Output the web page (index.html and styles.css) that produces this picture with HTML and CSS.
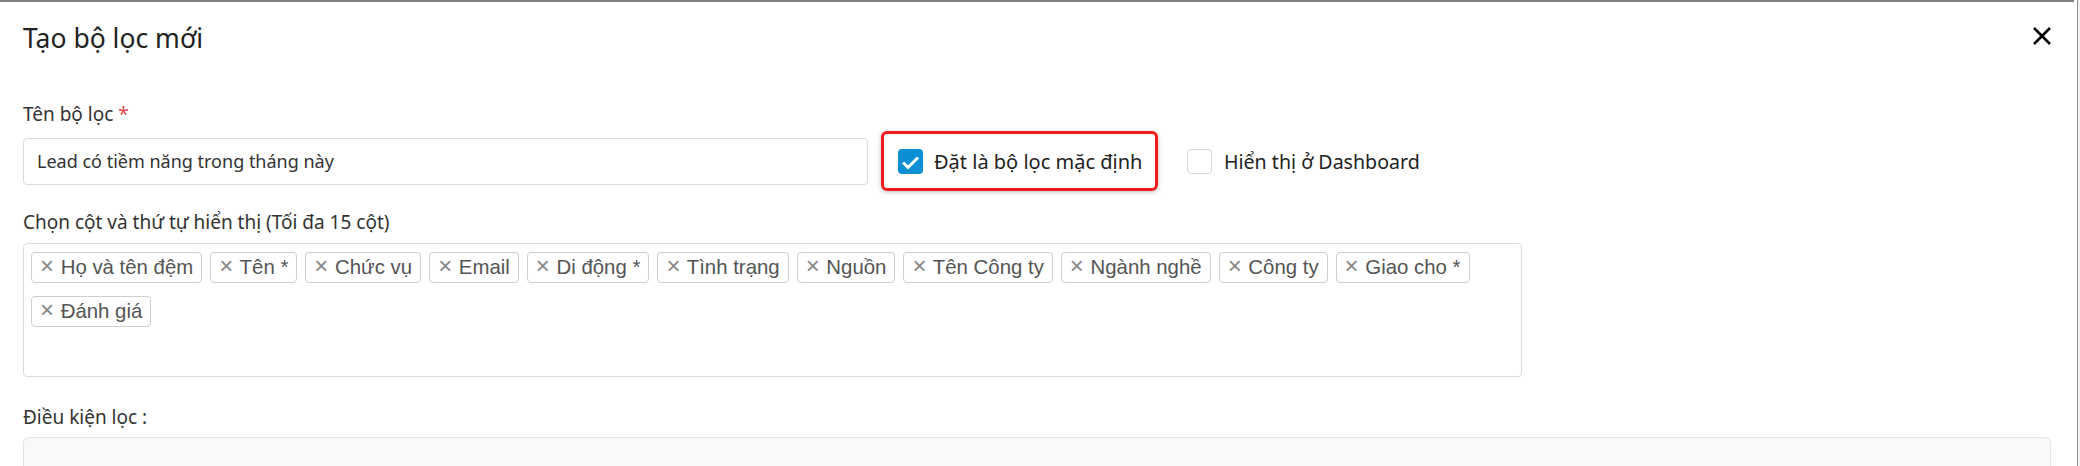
FILE: index.html
```html
<!DOCTYPE html>
<html lang="vi">
<head>
  <meta charset="UTF-8">
  <meta name="viewport" content="width=device-width, initial-scale=1.0">
  <title>Tạo bộ lọc mới</title>
  <link rel="stylesheet" href="styles.css">
</head>
<body>
  <div class="modal">
    <div class="modal-header">
      <h4 class="modal-title">Tạo bộ lọc mới</h4>
      <button class="close" aria-label="Đóng">
        <svg width="20" height="20" viewBox="0 0 20 20"><path d="M2 2 L18 18 M18 2 L2 18" stroke="#000" stroke-width="2.6" fill="none"/></svg>
      </button>
    </div>

    <div class="modal-body">
      <label class="field-label">Tên bộ lọc <span class="required">*</span></label>
      <div class="name-row">
        <input type="text" class="form-input" value="Lead có tiềm năng trong tháng này">
        <div class="highlight">
          <label class="check">
            <span class="box checked">
              <svg width="25" height="25" viewBox="0 0 25 25"><path d="M5 13.5 L10 18.5 L20 8.5" stroke="#fff" stroke-width="3" fill="none"/></svg>
            </span>
            Đặt là bộ lọc mặc định
          </label>
        </div>
        <label class="check plain">
          <span class="box"></span>
          Hiển thị ở Dashboard
        </label>
      </div>

      <label class="field-label">Chọn cột và thứ tự hiển thị (Tối đa 15 cột)</label>
      <div class="tag-box">
        <span class="tag"><span class="x">×</span> Họ và tên đệm</span>
        <span class="tag"><span class="x">×</span> Tên *</span>
        <span class="tag"><span class="x">×</span> Chức vụ</span>
        <span class="tag"><span class="x">×</span> Email</span>
        <span class="tag"><span class="x">×</span> Di động *</span>
        <span class="tag"><span class="x">×</span> Tình trạng</span>
        <span class="tag"><span class="x">×</span> Nguồn</span>
        <span class="tag"><span class="x">×</span> Tên Công ty</span>
        <span class="tag"><span class="x">×</span> Ngành nghề</span>
        <span class="tag"><span class="x">×</span> Công ty</span>
        <span class="tag"><span class="x">×</span> Giao cho *</span>
        <span class="tag"><span class="x">×</span> Đánh giá</span>
      </div>

      <label class="field-label cond">Điều kiện lọc :</label>
      <div class="cond-box"></div>
    </div>
  </div>
  <div class="edge"></div>
</body>
</html>
```

FILE: styles.css
```css
body {
  margin: 0;
  padding: 0;
  background: #fff;
  color: #333;
  font-family: 'Noto Sans', 'Open Sans', sans-serif;
  display: flex;
  height: 466px;
  overflow: hidden;
}
.modal {
  flex: 1;
  border-top: 2px solid #808080;
  background: #fff;
}
.edge {
  width: 2px;
  margin-left: 3px;
  border-left: 1px solid #8c8c8c;
  background: #f3f3f3;
}
.modal-header {
  display: flex;
  justify-content: space-between;
  align-items: flex-start;
  padding: 19px 22px 0 23px;
}
.modal-title {
  margin: 0;
  font-size: 26.5px;
  line-height: 35px;
  font-weight: 400;
  color: #222;
}
.close {
  background: none;
  border: none;
  padding: 0;
  margin-top: 5px;
  cursor: pointer;
}
.modal-body {
  padding: 45px 23px 0 23px;
}
.field-label {
  display: block;
  font-size: 19px;
  line-height: 26px;
  color: #333;
}
.required {
  color: #e0454f;
}
.name-row {
  display: flex;
  align-items: center;
  margin-top: 4px;
  margin-bottom: 18px;
}
.form-input {
  width: 845px;
  height: 47px;
  box-sizing: border-box;
  border: 1px solid #dcdcdc;
  border-radius: 4px;
  padding: 0 13px;
  font-family: inherit;
  font-size: 18px;
  color: #333;
}
.highlight {
  margin-left: 13px;
  width: 277px;
  height: 60px;
  box-sizing: border-box;
  border: 3px solid #f01b1b;
  border-radius: 6px;
  box-shadow: 0 1px 5px rgba(0,0,0,0.25);
  display: flex;
  align-items: center;
  padding-left: 14px;
}
.check {
  display: flex;
  align-items: center;
  gap: 11px;
  font-size: 20px;
  color: #222;
}
.check.plain {
  margin-left: 29px;
  gap: 12px;
  font-size: 19.6px;
}
.box {
  width: 23px;
  height: 23px;
  border: 1px solid #d6d6d6;
  border-radius: 4px;
  display: inline-block;
}
.box.checked {
  width: 25px;
  height: 25px;
  border: none;
  background: #0a8fd4;
}
.box svg {
  display: block;
}
.tag-box {
  margin-top: 8px;
  width: 1499px;
  height: 134px;
  box-sizing: border-box;
  border: 1px solid #dcdcdc;
  border-radius: 4px;
  padding: 8px 7px 7px;
  display: flex;
  flex-wrap: wrap;
  align-content: flex-start;
  gap: 13px 8px;
}
.tag {
  font-family: 'Liberation Sans', Arial, sans-serif;
  font-size: 20.4px;
  line-height: 23px;
  height: 23px;
  padding: 3px 8px;
  border: 1px solid #cfcfcf;
  border-radius: 4px;
  color: #555;
  background: #fff;
}
.tag .x {
  color: #888;
  font-size: 24px;
  line-height: 20px;
  margin-right: 1px;
}
.cond {
  margin-top: 27px;
}
.cond-box {
  margin-top: 7px;
  height: 120px;
  background: #f9f9f9;
  border: 1px solid #e3e3e3;
  border-radius: 6px;
}
```
